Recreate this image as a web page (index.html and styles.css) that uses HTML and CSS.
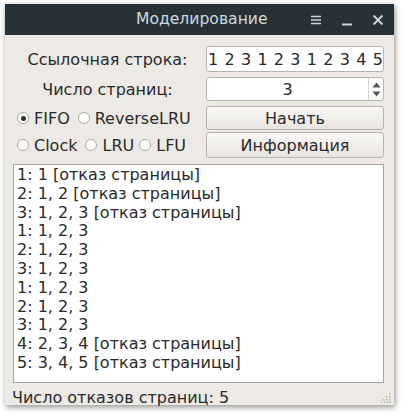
FILE: index.html
```html
<!DOCTYPE html>
<html lang="ru">
<head>
<meta charset="utf-8">
<link rel="stylesheet" href="styles.css">
</head>
<body>
<div class="window">
  <div class="titlebar">
    <span class="title">Моделирование</span>
    <div class="tb-icons">
      <svg width="12" height="12" viewBox="0 0 12 12"><path d="M1 2.5h10M1 6h10M1 9.5h10" stroke="#c9d3d6" stroke-width="1.6"/></svg>
      <svg width="12" height="12" viewBox="0 0 12 12"><path d="M1 10.5h10" stroke="#c9d3d6" stroke-width="2"/></svg>
      <svg width="12" height="12" viewBox="0 0 12 12"><path d="M1.5 1.5l9 9M10.5 1.5l-9 9" stroke="#c9d3d6" stroke-width="2"/></svg>
    </div>
  </div>
  <div class="content">
    <div class="grid">
      <div class="label">Ссылочная строка:</div>
      <div class="input">1 2 3 1 2 3 1 2 3 4 5</div>
      <div class="label">Число страниц:</div>
      <div class="spin">
        <span class="spin-val">3</span>
        <span class="spin-btns">
          <svg width="9" height="6" viewBox="0 0 9 6"><path d="M4.5 0.5L8.5 5.5H0.5Z" fill="#555"/></svg>
          <svg width="9" height="6" viewBox="0 0 9 6"><path d="M4.5 5.5L8.5 0.5H0.5Z" fill="#555"/></svg>
        </span>
      </div>
      <div class="radios">
        <span class="radio r1"><span class="dot on"></span>FIFO</span>
        <span class="radio"><span class="dot"></span>ReverseLRU</span>
      </div>
      <div class="btn">Начать</div>
      <div class="radios">
        <span class="radio r1"><span class="dot"></span>Clock</span>
        <span class="radio"><span class="dot"></span>LRU</span>
        <span class="radio"><span class="dot"></span>LFU</span>
      </div>
      <div class="btn">Информация</div>
    </div>
    <div class="output">
      <div>1: 1 [отказ страницы]</div>
      <div>2: 1, 2 [отказ страницы]</div>
      <div>3: 1, 2, 3 [отказ страницы]</div>
      <div>1: 1, 2, 3</div>
      <div>2: 1, 2, 3</div>
      <div>3: 1, 2, 3</div>
      <div>1: 1, 2, 3</div>
      <div>2: 1, 2, 3</div>
      <div>3: 1, 2, 3</div>
      <div>4: 2, 3, 4 [отказ страницы]</div>
      <div>5: 3, 4, 5 [отказ страницы]</div>
    </div>
    <div class="status">Число отказов страниц: 5</div>
    <svg class="grip" width="10" height="10" viewBox="0 0 10 10" fill="#b9b5ae">
      <rect x="8" y="0" width="1.5" height="1.5"/>
      <rect x="5" y="3" width="1.5" height="1.5"/><rect x="8" y="3" width="1.5" height="1.5"/>
      <rect x="2" y="6" width="1.5" height="1.5"/><rect x="5" y="6" width="1.5" height="1.5"/><rect x="8" y="6" width="1.5" height="1.5"/>
      <rect x="0" y="8.5" width="1.5" height="1.5"/><rect x="3" y="8.5" width="1.5" height="1.5"/><rect x="6" y="8.5" width="1.5" height="1.5"/><rect x="8.5" y="8.5" width="1.5" height="1.5"/>
    </svg>
  </div>
</div>
</body>
</html>
```
FILE: styles.css
```css
html, body {
  margin: 0;
  padding: 0;
  background: #ffffff;
}
body {
  padding: 4px 10px 10px 5px;
  font-family: "DejaVu Sans", Verdana, sans-serif;
  font-size: 16px;
  color: #2a2a2a;
}
.window {
  width: 389px;
  height: 401px;
  display: flex;
  flex-direction: column;
  background: #edeae5;
  box-shadow: 1px 2px 6px rgba(0,0,0,0.45);
}
.titlebar {
  height: 31px;
  flex: none;
  background: #263238;
  display: flex;
  align-items: center;
  position: relative;
}
.title {
  position: absolute;
  left: 131px;
  top: 6px;
  color: #cfdade;
  font-size: 15.6px;
}
.tb-icons {
  margin-left: auto;
  display: flex;
  gap: 19px;
  padding-right: 10px;
}
.content {
  flex: 1;
  display: flex;
  flex-direction: column;
  padding: 11px 9px 0 8px;
  position: relative;
}
.grid {
  display: grid;
  grid-template-columns: 193px 178px;
  grid-template-rows: 26px 24px 24px 23px;
  row-gap: 5px;
}
.grid > :nth-child(n+7) {
  margin-top: -3px;
}
.label {
  display: flex;
  align-items: center;
  justify-content: center;
  padding-right: 4px;
}
.input {
  background: #fff;
  border: 1px solid #b7b3ad;
  border-radius: 3px;
  display: flex;
  align-items: center;
  padding-left: 1px;
  word-spacing: 1.2px;
  white-space: nowrap;
  overflow: hidden;
}
.spin {
  background: #fff;
  border: 1px solid #b7b3ad;
  border-radius: 3px;
  display: flex;
  align-items: center;
}
.spin-val {
  flex: 1;
  text-align: center;
}
.spin-btns {
  width: 14px;
  height: 100%;
  border-left: 1px solid #d7d4cf;
  display: flex;
  flex-direction: column;
  justify-content: center;
  align-items: center;
  gap: 3px;
}
.radios {
  display: flex;
  align-items: center;
  gap: 5px;
  margin-left: 4px;
  white-space: nowrap;
}
.radio {
  display: flex;
  align-items: center;
  gap: 5px;
}
.r1 {
  margin-right: 3px;
}
.dot {
  width: 12px;
  height: 12px;
  border: 1px solid #aaa6a0;
  border-radius: 50%;
  background: #fff;
  position: relative;
  box-sizing: border-box;
  flex: none;
}
.dot.on::after {
  content: "";
  position: absolute;
  left: 2.5px;
  top: 2.5px;
  width: 5px;
  height: 5px;
  border-radius: 50%;
  background: #333;
}
.btn {
  border: 1px solid #b7b3ad;
  border-radius: 3px;
  background: linear-gradient(#f9f8f6, #e9e6e1);
  display: flex;
  align-items: center;
  justify-content: center;
}
.output {
  margin-top: 6px;
  height: 219px;
  background: #fff;
  border: 1px solid #a9a59f;
  padding: 1px 3px 0;
  line-height: 18.8px;
  box-sizing: border-box;
  width: 371px;
}
.status {
  padding-top: 5px;
  margin-left: -1px;
}
.grip {
  position: absolute;
  right: 3px;
  bottom: 4px;
}
```
